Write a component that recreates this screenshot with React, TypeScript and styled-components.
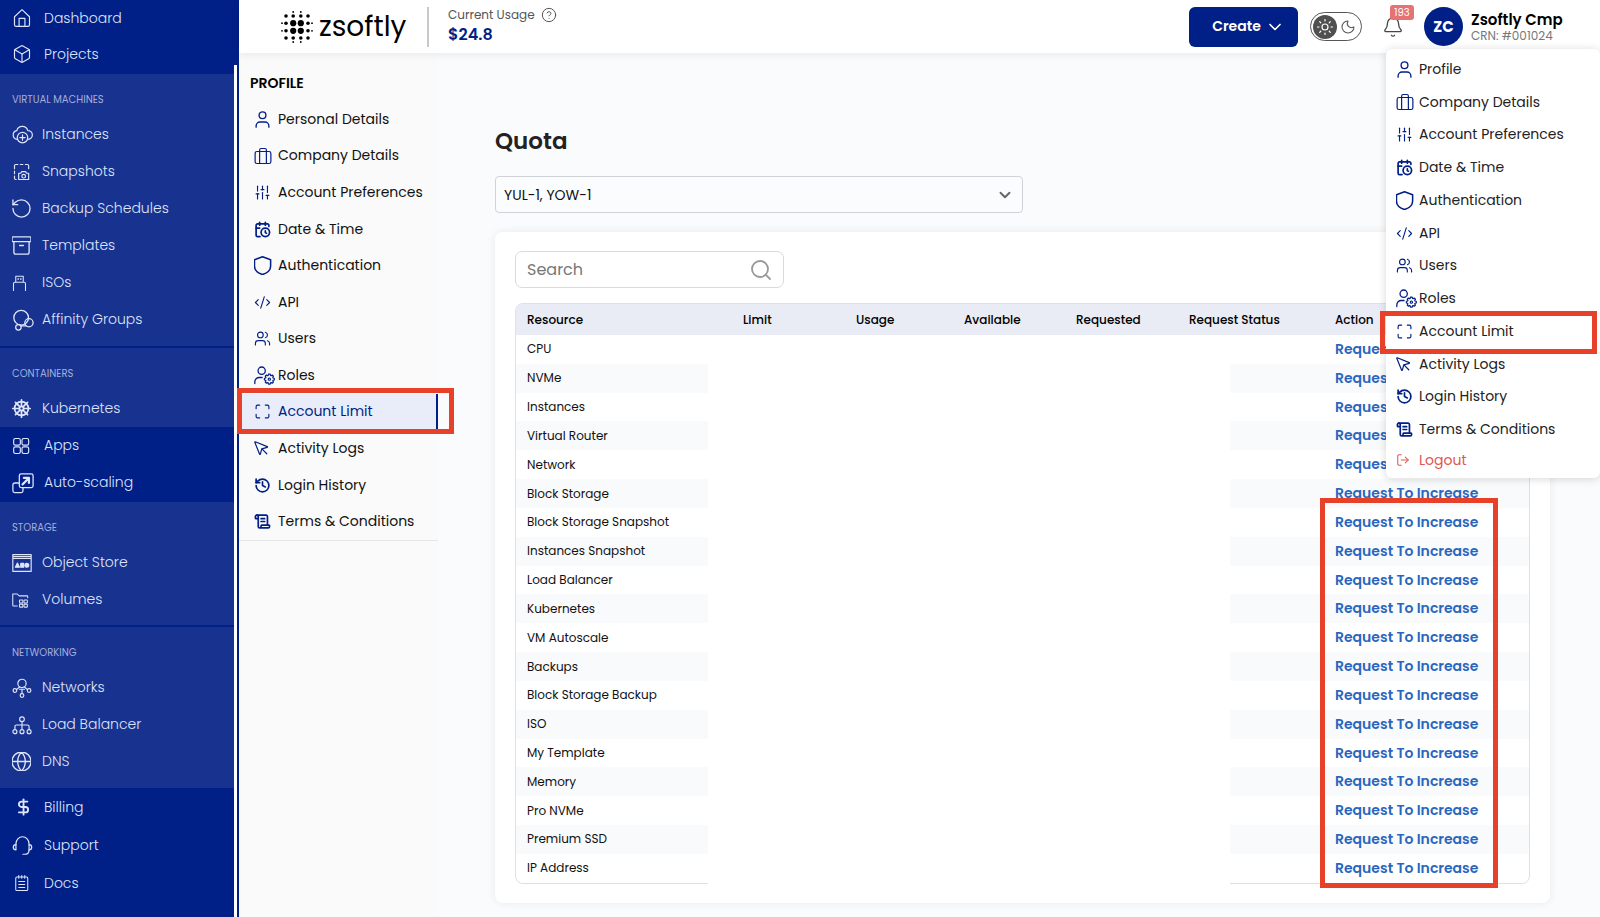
import React from "react";
import styled, { createGlobalStyle, css } from "styled-components";
import {
  Box, RotateCcw, Archive, ShipWheel, Globe, SlidersVertical, CalendarClock,
  CodeXml, Users, Maximize, MousePointer, History, ScrollText, LogOut, ChevronDown,
  CircleQuestionMark, Bell, Moon, Sun, Search, DollarSign,
} from "lucide-react";

const navy = "#001f87";
const indigo = "#18328f";
const red = "#e8412a";

const GlobalStyle = createGlobalStyle`
  *, *::before, *::after { box-sizing: border-box; }
  body {
    margin: 0;
    background: #fafbfd;
    color: #111;
    font-family: Poppins, Inter, "Liberation Sans", sans-serif;
    font-size: 14px;
    overflow-x: hidden;
  }
  a { color: inherit; text-decoration: none; }
  button, input, select { font: inherit; color: inherit; }
  h1, h2, p, ul { margin: 0; padding: 0; }
  ul { list-style: none; }
  svg { display: block; flex: none; }
`;

/* ---------- icons ---------- */

type IconProps = { size?: number; strokeWidth?: number };
type GlyphProps = IconProps & { box?: string; children: React.ReactNode };

const Glyph = ({ size = 20, strokeWidth = 1.4, box = "0 0 24 24", children }: GlyphProps) => (
  <svg width={size} height={size} viewBox={box} fill="none" stroke="currentColor"
    strokeWidth={strokeWidth} strokeLinecap="round" strokeLinejoin="round" aria-hidden="true">
    {children}
  </svg>
);

/* Library icons without their empty outer margin. */
const tight = (Icon: React.ComponentType<any>) => (p: IconProps) => <Icon {...p} viewBox="2 2 20 20" />;
const RestoreIcon = tight(RotateCcw);
const ArchiveIcon = tight(Archive);
const GlobeIcon = tight(Globe);
const PointerIcon = tight(MousePointer);
const WheelIcon = ({ size }: IconProps) => <ShipWheel size={size} strokeWidth={2} viewBox="1 1 22 22" />;
const DollarIcon = ({ size }: IconProps) => <DollarSign size={size} strokeWidth={2.4} viewBox="-3 -1 26 26" />;

const HomeIcon = (p: IconProps) => (
  <Glyph {...p}>
    <path d="M3 10.5 12 2l9 8.500V20a2 2 0 0 1-2 2H5a2 2 0 0 1-2-2z" />
    <path d="M8.500 22v-9.500h7V22" />
  </Glyph>
);
const CloudPlusIcon = (p: IconProps) => (
  <Glyph {...p}>
    <path d="M6 17.500a5 5 0 0 1-.5-9.900A6.500 6.500 0 0 1 18 7.500a5 5 0 0 1 .5 10" />
    <circle cx="12" cy="15.500" r="6" />
    <path d="M12 12.500v6M9 15.500h6" />
  </Glyph>
);
const SnapshotIcon = (p: IconProps) => (
  <Glyph {...p}>
    <path d="M3 8V4.500A1.500 1.500 0 0 1 4.500 3H7M10 3h3M16 3h2.500A1.500 1.500 0 0 1 20 4.500V8M3 11v3M3 17v2.500A1.500 1.500 0 0 0 4.500 21H5" />
    <path d="M8 13.500h2.500l1.200-2h4.600l1.200 2H20V21H8z" />
    <circle cx="14" cy="17" r="2.200" />
  </Glyph>
);
const UsbIcon = (p: IconProps) => (
  <Glyph {...p}>
    <path d="M2 22v-9a2 2 0 0 1 2-2h12a2 2 0 0 1 2 2v9M5 11V3h10v8" />
    <path d="M8 6.500h.5M11.500 6.500h.5" strokeWidth={2} />
  </Glyph>
);
const AffinityIcon = (p: IconProps) => (
  <Glyph {...p}>
    <circle cx="10" cy="9.500" r="8" />
    <circle cx="18.500" cy="15" r="4.500" />
    <circle cx="7" cy="20" r="3" />
    <path d="m10 18.500 5.500 0" />
  </Glyph>
);
const AppsIcon = (p: IconProps) => (
  <Glyph {...p}>
    {[[2, 3], [12, 3], [2, 13], [12, 13]].map(([x, y]) => (
      <rect key={`${x}-${y}`} x={x} y={y} width="8" height="8" rx="2" />
    ))}
  </Glyph>
);
const ScaleIcon = (p: IconProps) => (
  <Glyph {...p}>
    <rect x="8" y="2" width="15" height="15" rx="2" />
    <path d="M8 12H3a2 2 0 0 0-2 2v6.500a2 2 0 0 0 2 2h7a2 2 0 0 0 2-2V17" />
    <path d="m11.500 13.500 6.500-6.500M13 6.500h5.500V12" strokeWidth={2.400} />
  </Glyph>
);
const ObjectStoreIcon = (p: IconProps) => (
  <Glyph {...p}>
    <path d="M1 2h22v20H1zM1 6.500h22M2 4.200h20" />
    <path d="m4 17 2.500-5L9 17zM10.500 12.500h3.500V17h-3.500z" fill="currentColor" />
    <circle cx="17.800" cy="14.700" r="2.300" fill="currentColor" />
  </Glyph>
);
const VolumeIcon = (p: IconProps) => (
  <Glyph {...p}>
    <path d="M7 20H2a1 1 0 0 1-1-1V4h6l2.500 2.500H20a1 1 0 0 1 1 1V9" />
    {[[10, 12], [16, 12], [10, 17.500], [16, 17.500]].map(([x, y]) => (
      <rect key={`${x}-${y}`} x={x} y={y} width="4.500" height="4" rx="1" />
    ))}
  </Glyph>
);
const NetworkIcon = (p: IconProps) => (
  <Glyph {...p}>
    <circle cx="12" cy="6.500" r="5" />
    <circle cx="3.500" cy="15" r="2.200" />
    <circle cx="20.500" cy="15" r="2.200" />
    <circle cx="12" cy="21" r="2.200" />
    <path d="M12 18.500V14M5.500 14l3.800-3.500M18.500 14l-3.800-3.500M9 13.500h6" />
  </Glyph>
);
const BalancerIcon = (p: IconProps) => (
  <Glyph {...p}>
    <circle cx="12" cy="5" r="2.800" />
    <circle cx="3.500" cy="20" r="2.400" />
    <circle cx="12" cy="20" r="2.400" />
    <circle cx="20.500" cy="20" r="2.400" />
    <path d="M12 8v9.500M3.500 17.500V14a2 2 0 0 1 2-2h13a2 2 0 0 1 2 2v3.500" />
  </Glyph>
);
const HeadsetIcon = (p: IconProps) => (
  <Glyph {...p}>
    <path d="M4.500 11V10a7.500 8 0 0 1 15 0v1M19.500 17c0 3-2 5-5 5h-2" />
    <path d="M4.500 11a3 3 0 0 0 0 6zM19.500 11a3 3 0 0 1 0 6z" />
  </Glyph>
);
const DocsIcon = (p: IconProps) => (
  <Glyph {...p}>
    <rect x="5" y="4" width="16" height="18" rx="1.500" />
    <path d="M9 2v3.500M13 2v3.500M17 2v3.500M9 10h8M9 14h8M9 18h8" />
  </Glyph>
);
const PersonIcon = (p: IconProps) => (
  <Glyph {...p} box="2 2 20 20">
    <circle cx="12" cy="7" r="4" />
    <path d="M4.500 21v-1.500A4.500 4.500 0 0 1 9 15h6a4.500 4.500 0 0 1 4.500 4.500V21" />
  </Glyph>
);
const ShieldIcon = ({ size = 17, strokeWidth }: IconProps) => (
  <Glyph size={size + 2} strokeWidth={strokeWidth} box="3 2 20 20">
    <path d="M20.500 6v6.500c0 4.500-3.500 7.500-8.500 9-5-1.500-8.500-4.500-8.500-9V6L12 2.800z" />
  </Glyph>
);
const SuitcaseIcon = ({ size = 17, strokeWidth }: IconProps) => (
  <Glyph size={size + 1} strokeWidth={strokeWidth}>
    <rect x="1.500" y="6" width="21" height="16" rx="2.500" />
    <path d="M7.500 22V4a2 2 0 0 1 2-2h5a2 2 0 0 1 2 2v18" />
  </Glyph>
);

/* Outline of an eight-toothed wheel around (cx, cy). */
const gearOutline = (cx: number, cy: number, inner: number, outer: number) => {
  const points: string[] = [];
  for (let tooth = 0; tooth < 8; tooth++) {
    [[-0.3, inner], [-0.17, outer], [0.17, outer], [0.3, inner]].forEach(([shift, radius]) => {
      const angle = (tooth * Math.PI) / 4 + shift;
      points.push(`${(cx + radius * Math.cos(angle)).toFixed(2)} ${(cy + radius * Math.sin(angle)).toFixed(2)}`);
    });
  }
  return `M${points.join("L")}Z`;
};
const RolesIcon = ({ size = 17, strokeWidth }: IconProps) => (
  <Glyph size={size + 4} strokeWidth={strokeWidth} box="0 0 26 26">
    <circle cx="9.500" cy="7" r="4.500" />
    <path d="M1 23v-2a5.500 5.500 0 0 1 5.500-5.500H10" />
    <path d={gearOutline(19, 17.5, 4.8, 6.2)} strokeWidth={1.500} />
    <circle cx="19" cy="17.500" r="1.400" strokeWidth={1.500} />
  </Glyph>
);

const logoDots: [number, number, number][] = [];
[-1, 1].forEach((sx) =>
  [-1, 1].forEach((sy) => {
    logoDots.push([sx * 3.8, sy * 3.8, 3.1], [sx * 11, sy * 3.8, 1.8], [sx * 3.8, sy * 11, 1.8]);
    logoDots.push([sx * 11, sy * 11, 1.8], [sx * 15, sy * 3.8, 0.9], [sx * 3.8, sy * 15, 0.9]);
  }),
);
const LogoMark = () => (
  <svg width="32" height="32" viewBox="-16 -16 32 32" aria-hidden="true">
    {logoDots.map(([x, y, r]) => <circle key={`${x},${y}`} cx={x} cy={y} r={r} />)}
  </svg>
);

/* ---------- shell ---------- */

const Shell = styled.div`
  display: flex;
  min-height: 100vh;
`;

const Sidebar = styled.nav`
  position: relative;
  flex: 0 0 239px;
  padding-right: 5px;
  background: ${navy};
  color: #dfe5fa;
`;

const ScrollThumb = styled.div`
  position: absolute;
  top: 65px;
  right: 2px;
  bottom: 0;
  width: 3px;
  background: #fff;
`;

const NavBlock = styled.div<{ $light: boolean; $end: number; $rule?: boolean }>`
  padding-bottom: ${(p) => p.$end}px;
  border-bottom: ${(p) => (p.$rule ? `2px solid ${navy}` : "0")};
  background: ${(p) => (p.$light ? indigo : navy)};
`;

const NavHeading = styled.h2`
  height: 42px;
  padding: 18px 12px 0;
  color: #a3afdb;
  font-size: 10px;
  font-weight: 400;
  line-height: 16px;
`;

const NavLink = styled.a<{ $height: number; $indent?: boolean }>`
  display: grid;
  grid-template-columns: ${(p) => (p.$indent ? "32px" : "30px")} 1fr;
  align-items: center;
  height: ${(p) => p.$height}px;
  padding-left: 12px;
  font-weight: 300;
`;

const Main = styled.div`
  display: flex;
  flex: 1;
  flex-direction: column;
  min-width: 0;
`;

const TopBar = styled.header`
  position: relative;
  z-index: 3;
  display: flex;
  align-items: center;
  height: 53px;
  padding-left: 42px;
  background: #fff;
  box-shadow: 0 2px 8px rgba(0, 0, 0, 0.07);
`;

const Brand = styled.a`
  display: flex;
  align-items: center;
  gap: 6px;
  width: 148px;
  height: 40px;
  border-right: 2px solid #c9c9c9;
  color: #000;
  font-size: 28px;
  line-height: 32px;
`;

const Usage = styled.div`
  flex: 1;
  padding: 0 0 2px 19px;
  color: #555;
  font-size: 12px;
`;

const UsageLabel = styled.p`
  display: flex;
  align-items: center;
  gap: 6px;
  line-height: 18px;
`;

const UsageAmount = styled.p`
  color: ${navy};
  font-size: 16px;
  font-weight: 600;
  line-height: 22px;
`;

const CreateButton = styled.button`
  display: flex;
  align-items: center;
  justify-content: center;
  gap: 4px;
  width: 109px;
  height: 40px;
  padding: 0 0 0 10px;
  border: 0;
  border-radius: 6px;
  background: ${navy};
  color: #fff;
  font-weight: 600;
`;

const ThemeToggle = styled.label`
  position: relative;
  display: flex;
  align-items: center;
  justify-content: space-between;
  width: 52px;
  height: 29px;
  margin-left: 12px;
  padding: 0 5px 0 2px;
  border: 1px solid #555;
  border-radius: 15px;
  color: #555;
  input { position: absolute; inset: 0; width: 100%; height: 100%; margin: 0; opacity: 0; }
`;

const SunDisc = styled.span`
  display: grid;
  place-items: center;
  width: 24px;
  height: 24px;
  border-radius: 50%;
  background: #505050;
  color: #fff;
`;

const BellButton = styled.button`
  position: relative;
  margin: 0 20px;
  padding: 0;
  border: 0;
  background: none;
  color: #444;
`;

const BellCount = styled.span`
  position: absolute;
  top: -11px;
  left: 8px;
  width: 24px;
  border-radius: 3px;
  background: #e57373;
  color: #fff;
  font-size: 10px;
  line-height: 15px;
`;

const Account = styled.button`
  display: flex;
  align-items: center;
  gap: 8px;
  width: 176px;
  padding: 0;
  border: 0;
  background: none;
  text-align: left;
`;

const Avatar = styled.span`
  display: grid;
  place-items: center;
  width: 39px;
  height: 39px;
  border-radius: 50%;
  background: ${navy};
  color: #fff;
  font-size: 15px;
  font-weight: 700;
`;

const AccountName = styled.strong`
  display: block;
  color: #000;
  font-size: 15px;
  font-weight: 600;
  line-height: 18px;
`;

const AccountNumber = styled.span`
  display: block;
  color: #777;
  font-size: 12px;
  line-height: 14px;
`;

const Marker = styled.div`
  position: absolute;
  z-index: 4;
  border: 5px solid ${red};
  pointer-events: none;
`;

const MenuPanel = styled.nav`
  position: absolute;
  top: 49px;
  right: 0;
  width: 214px;
  padding: 4px 0;
  border-radius: 6px;
  background: #fff;
  box-shadow: 0 1px 8px rgba(0, 0, 0, 0.16);
`;

const MenuList = styled.ul`
  display: grid;
  grid-auto-rows: 1fr;
  min-height: 393px;
`;

const MenuItem = styled.li`
  position: relative;
  display: grid;
`;

const MenuLink = styled.a<{ $danger?: boolean }>`
  display: grid;
  grid-template-columns: 23px 1fr;
  align-items: center;
  min-height: 28px;
  padding-left: 10px;
  color: ${(p) => (p.$danger ? "#e0564f" : "#222")};
  svg { color: ${(p) => (p.$danger ? "#e0564f" : navy)}; }
`;

const MenuMarker = styled(Marker)`
  inset: -4px 3px -6px -6px;
`;

/* ---------- page ---------- */

const Body = styled.div`
  display: flex;
  flex: 1;
`;

const ProfileColumn = styled.aside`
  flex: 0 0 199px;
  background: #fafafa;
`;

const ProfileHeading = styled.h2`
  padding: 20px 11px 8px;
  color: #000;
  font-size: 14px;
  font-weight: 600;
  line-height: 20px;
`;

const ProfileList = styled.ul`
  display: grid;
  grid-auto-rows: 1fr;
  min-height: 440px;
  border-bottom: 1px solid #e6e6e6;
`;

const ProfileItem = styled.li`
  position: relative;
  display: grid;
`;

const ProfileLink = styled.a<{ $active?: boolean }>`
  display: grid;
  grid-template-columns: 24px 1fr;
  align-items: center;
  padding-left: 15px;
  color: #111;
  svg { color: ${navy}; }
  ${(p) => p.$active && css`
    border-right: 2px solid ${navy};
    background: #e9edfa;
    color: ${navy};
  `}
`;

const ProfileMarker = styled(Marker)`
  inset: -6px -16px -4px -2px;
`;

const Content = styled.main`
  flex: 1;
  min-width: 0;
  padding: 70px 50px 14px 57px;
`;

const PageTitle = styled.h1`
  color: #222;
  font-size: 23px;
  font-weight: 600;
  line-height: 36px;
`;

const ZonePicker = styled.div`
  position: relative;
  width: 50%;
  margin: 17px 0 19px;
  svg { position: absolute; top: 10px; right: 9px; color: #666; pointer-events: none; }
`;

const ZoneSelect = styled.select`
  display: block;
  width: 100%;
  height: 37px;
  padding: 0 8px;
  appearance: none;
  border: 1px solid #cfd2d6;
  border-radius: 4px;
  background: #fbfcfd;
`;

const Card = styled.section`
  padding: 19px 20px;
  border-radius: 8px;
  background: #fff;
  box-shadow: 0 0 10px rgba(0, 0, 0, 0.07);
`;

const SearchBox = styled.div`
  position: relative;
  width: 269px;
  margin-bottom: 15px;
  svg { position: absolute; top: 7px; right: 11px; color: #999; }
`;

const SearchInput = styled.input`
  display: block;
  width: 100%;
  height: 37px;
  padding: 0 11px;
  border: 1px solid #d9dadd;
  border-radius: 7px;
  background: #fff;
  font-size: 16px;
  &::placeholder { color: #777; opacity: 1; }
`;

const TableFrame = styled.div`
  position: relative;
`;

const QuotaTable = styled.table`
  width: 100%;
  height: 581px;
  table-layout: fixed;
  border: 1px solid #dfe0e3;
  border-radius: 8px;
  border-collapse: separate;
  border-spacing: 0;
  overflow: hidden;
  font-size: 12px;
`;

const HeadCell = styled.th<{ $width?: number }>`
  width: ${(p) => (p.$width ? `${p.$width}px` : "auto")};
  height: 31px;
  padding: 0 0 0 11px;
  background: #e9ecf5;
  color: #000;
  font-size: 12px;
  font-weight: 500;
  text-align: left;
  white-space: nowrap;
`;

const Row = styled.tr`
  &:nth-child(even) { background: #f9fafc; }
`;

const Cell = styled.td`
  padding: 0 0 0 11px;
`;

const RequestLink = styled.a`
  color: #2a66bd;
  font-size: 14px;
  font-weight: 600;
`;

const ValueCover = styled.div`
  position: absolute;
  inset: 32px 300px 0 193px;
  background: #fff;
`;

const RequestMarker = styled(Marker)`
  z-index: 1;
  top: 195px;
  right: 32px;
  bottom: -4px;
  width: 178px;
`;

/* ---------- data ---------- */

type NavEntry = [string, React.ComponentType<any>, number?];
type NavGroup = {
  title?: string; light?: boolean; end?: number; rule?: boolean; height: number; items: NavEntry[];
};

const navGroups: NavGroup[] = [
  { end: 2, height: 36, items: [["Dashboard", HomeIcon], ["Projects", Box]] },
  {
    title: "VIRTUAL MACHINES", light: true, end: 8, rule: true, height: 37,
    items: [["Instances", CloudPlusIcon, 21], ["Snapshots", SnapshotIcon], ["Backup Schedules", RestoreIcon, 19],
      ["Templates", ArchiveIcon, 19], ["ISOs", UsbIcon, 18], ["Affinity Groups", AffinityIcon, 22]],
  },
  { title: "CONTAINERS", light: true, height: 37, items: [["Kubernetes", WheelIcon, 19]] },
  { end: 1, height: 37, items: [["Apps", AppsIcon], ["Auto-scaling", ScaleIcon, 22]] },
  {
    title: "STORAGE", light: true, end: 7, rule: true, height: 37,
    items: [["Object Store", ObjectStoreIcon], ["Volumes", VolumeIcon, 18]],
  },
  {
    title: "NETWORKING", light: true, end: 8, height: 37,
    items: [["Networks", NetworkIcon], ["Load Balancer", BalancerIcon], ["DNS", GlobeIcon, 19]],
  },
  { height: 38, items: [["Billing", DollarIcon], ["Support", HeadsetIcon, 21], ["Docs", DocsIcon, 18]] },
];

const profileLinks: NavEntry[] = [
  ["Personal Details", PersonIcon], ["Company Details", SuitcaseIcon], ["Account Preferences", SlidersVertical],
  ["Date & Time", CalendarClock], ["Authentication", ShieldIcon], ["API", CodeXml], ["Users", Users],
  ["Roles", RolesIcon], ["Account Limit", Maximize], ["Activity Logs", PointerIcon, 15],
  ["Login History", History], ["Terms & Conditions", ScrollText],
];
const heavyIcons = ["Date & Time", "Login History", "Terms & Conditions"];

const columns: [string, number?][] = [
  ["Resource", 216], ["Limit", 113], ["Usage", 108], ["Available", 112],
  ["Requested", 113], ["Request Status", 146], ["Action"],
];
const resources = [
  "CPU", "NVMe", "Instances", "Virtual Router", "Network", "Block Storage", "Block Storage Snapshot",
  "Instances Snapshot", "Load Balancer", "Kubernetes", "VM Autoscale", "Backups", "Block Storage Backup",
  "ISO", "My Template", "Memory", "Pro NVMe", "Premium SSD", "IP Address",
];

function SideNavigation() {
  return (
    <Sidebar aria-label="Main">
      {navGroups.map(({ title, light = false, end = 0, rule, height, items }) => (
        <NavBlock key={items[0][0]} $light={light} $end={end} $rule={rule}>
          {title && <NavHeading>{title}</NavHeading>}
          {items.map(([label, Icon, size = 20]) => (
            <NavLink key={label} href="#" $height={height} $indent={!light}>
              <Icon size={size} strokeWidth={1.4} />
              {label}
            </NavLink>
          ))}
        </NavBlock>
      ))}
      <ScrollThumb />
    </Sidebar>
  );
}

function ProfileIcon({ entry: [label, Icon, size = 17] }: { entry: NavEntry }) {
  return <Icon size={size} strokeWidth={heavyIcons.includes(label) ? 2.4 : 1.6} />;
}

export default function App() {
  return (
    <Shell>
      <GlobalStyle />
      <SideNavigation />
      <Main>
        <TopBar>
          <Brand href="#"><LogoMark />zsoftly</Brand>
          <Usage>
            <UsageLabel>Current Usage <CircleQuestionMark size={16} strokeWidth={1.5} /></UsageLabel>
            <UsageAmount>$24.8</UsageAmount>
          </Usage>
          <CreateButton type="button">Create <ChevronDown size={20} /></CreateButton>
          <ThemeToggle>
            <input type="checkbox" role="switch" aria-label="Dark theme" />
            <SunDisc><Sun size={18} strokeWidth={1.6} /></SunDisc>
            <Moon size={16} strokeWidth={1.6} />
          </ThemeToggle>
          <BellButton type="button" aria-label="Notifications">
            <Bell size={22} strokeWidth={1.4} />
            <BellCount>193</BellCount>
          </BellButton>
          <Account type="button" aria-expanded="true">
            <Avatar>ZC</Avatar>
            <span>
              <AccountName>Zsoftly Cmp</AccountName>
              <AccountNumber>CRN: #001024</AccountNumber>
            </span>
          </Account>
          <MenuPanel aria-label="Account">
            <MenuList>
              {profileLinks.map((entry, index) => (
                <MenuItem key={entry[0]}>
                  <MenuLink href="#">
                    <ProfileIcon entry={entry} />
                    {index === 0 ? "Profile" : entry[0]}
                  </MenuLink>
                  {entry[0] === "Account Limit" && <MenuMarker />}
                </MenuItem>
              ))}
            </MenuList>
            <MenuLink href="#" $danger><LogOut size={14} strokeWidth={1.8} />Logout</MenuLink>
          </MenuPanel>
        </TopBar>
        <Body>
          <ProfileColumn>
            <ProfileHeading>PROFILE</ProfileHeading>
            <ProfileList>
              {profileLinks.map((entry) => (
                <ProfileItem key={entry[0]}>
                  <ProfileLink href="#" $active={entry[0] === "Account Limit"}>
                    <ProfileIcon entry={entry} />
                    {entry[0]}
                  </ProfileLink>
                  {entry[0] === "Account Limit" && <ProfileMarker />}
                </ProfileItem>
              ))}
            </ProfileList>
          </ProfileColumn>
          <Content>
            <PageTitle>Quota</PageTitle>
            <ZonePicker>
              <ZoneSelect aria-label="Zones" defaultValue="all">
                <option value="all">YUL-1, YOW-1</option>
              </ZoneSelect>
              <ChevronDown size={18} strokeWidth={2.6} />
            </ZonePicker>
            <Card>
              <SearchBox>
                <SearchInput type="search" aria-label="Search" placeholder="Search" />
                <Search size={24} strokeWidth={1.8} />
              </SearchBox>
              <TableFrame>
                <QuotaTable>
                  <thead>
                    <tr>
                      {columns.map(([label, width]) => (
                        <HeadCell key={label} scope="col" $width={width}>{label}</HeadCell>
                      ))}
                    </tr>
                  </thead>
                  <tbody>
                    {resources.map((name) => (
                      <Row key={name}>
                        <Cell>{name}</Cell>
                        <Cell /><Cell /><Cell /><Cell /><Cell />
                        <Cell><RequestLink href="#">Request To Increase</RequestLink></Cell>
                      </Row>
                    ))}
                  </tbody>
                </QuotaTable>
                <ValueCover />
                <RequestMarker />
              </TableFrame>
            </Card>
          </Content>
        </Body>
      </Main>
    </Shell>
  );
}
